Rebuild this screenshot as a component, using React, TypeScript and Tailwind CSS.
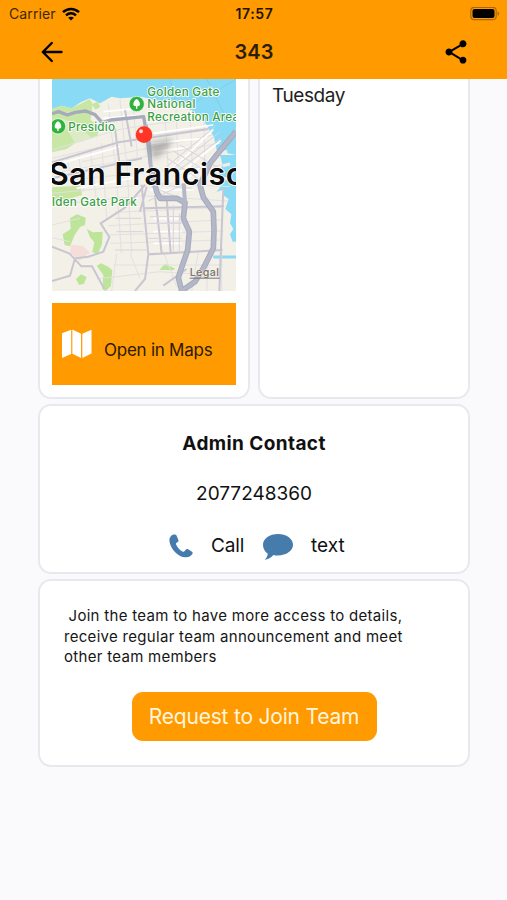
import type { ReactNode } from "react";
import { MdShare } from "react-icons/md";

interface CardProps {
  className: string;
  children: ReactNode;
}

const Card = ({ className, children }: CardProps) => (
  <section className={`border-2 border-[#e8e9ec] bg-white ${className}`}>{children}</section>
);

const StatusBar = () => (
  <div className="grid h-[27px] grid-cols-3 items-center pl-[9px] pr-[7px] text-black">
    <div className="flex items-center gap-[6px]">
      <span className="text-[14px] leading-none tracking-[0.1px] text-[#3b2808]">Carrier</span>
      <svg width="18" height="14" viewBox="0 0 18 14" fill="none" stroke="black" strokeWidth="2.5">
        <path d="M1 5.2C5.6.8 12.4.8 17 5.2" />
        <path d="M4 8.4c3-2.8 7-2.8 10 0" />
        <path d="M9 13.6 6.2 10.8c1.6-1.5 4-1.5 5.6 0Z" fill="black" stroke="none" />
      </svg>
    </div>
    <span className="text-center text-[14px] font-semibold leading-none tracking-[0.6px] text-[#201400]">17:57</span>
    <svg className="justify-self-end" width="30" height="14" viewBox="0 0 30 14">
      <rect x=".8" y=".3" width="25.4" height="12.4" rx="3.5" fill="none" stroke="#a8690c" strokeWidth="1.2" />
      <rect x="2.5" y="2" width="22" height="9" rx="2" fill="black" />
      <path d="M27.6 4.200c2 .8 2 3.800 0 4.600Z" fill="#a8690c" />
    </svg>
  </div>
);

const Header = () => (
  <header className="h-[79px] bg-[#ff9a00]">
    <StatusBar />
    <nav className="grid h-[50px] grid-cols-3 items-center pl-[38px] pr-[37px]">
      <button aria-label="Back">
        <svg width="28" height="28" viewBox="0 0 28 28" fill="none" stroke="black" strokeWidth="2.4" strokeLinecap="round" strokeLinejoin="round">
          <path d="M23.500 14H5M13.800 5 4.800 14l9 9" />
        </svg>
      </button>
      <h1 className="text-center text-[20px] font-semibold leading-none text-[#2b1e08]">343</h1>
      <button aria-label="Share" className="justify-self-end">
        <MdShare size={28} />
      </button>
    </nav>
  </header>
);

const TreeMarker = ({ x, y }: { x: number; y: number }) => (
  <g transform={`translate(${x} ${y})`}>
    <circle r="23" fill="#2fb33d" stroke="white" strokeWidth="2" />
    <path d="M0-15c-7 3-10 11-10 16 0 4 3 6 8 6v7h4V7c5 0 8-2 8-6 0-5-3-13-10-16Z" fill="white" />
  </g>
);

const CityMap = () => (
  <svg className="block h-[212px] w-full" viewBox="36 12 552 636" preserveAspectRatio="none">
    <defs>
      <filter id="shade" x="-50%" y="-50%" width="200%" height="200%">
        <feGaussianBlur stdDeviation="9" />
      </filter>
    </defs>
    <rect x="36" y="12" width="552" height="636" fill="#f3f0e8" />

    {/* ocean and bay */}
    <path d="M36 12H588V240L560 234 530 225 522 185 490 135 455 105 400 82 345 76 305 65 240 70 215 65 180 85 150 70 122 82 95 100 65 92 36 102Z" fill="#88daf5" />
    <path d="M588 240H540L548 270 535 300 550 325 530 350 508 358 548 345 552 362 566 372 556 402 574 418 570 444 580 462 570 478 578 500H588Z" fill="#88daf5" />
    <path d="M520 546h68" stroke="#88daf5" strokeWidth="9" fill="none" />
    <path d="M548 230l14 0M548 272l22-5M550 310l24 4" stroke="#f2eee5" strokeWidth="9" fill="none" />
    <path d="M450 105c15-25 45-45 85-60l53-33M500 12l55 110M390 12l20 80" stroke="#7bc8e5" strokeWidth="2" fill="none" />

    {/* parks */}
    <path d="M36 102 65 92 95 100 125 85 150 72 158 88 152 135 180 155 172 182 105 205 80 222 36 232Z" fill="#c8e7a5" />
    <path d="M60 130l50 15 45 45-50 15-20-35Z" fill="#dcebc5" />
    <path d="M155 88l18-8 8 15-14 9ZM36 337l86-5 4 28-90 26Z" fill="#c5e5a1" />
    <path d="M90 430 111 418 137 428 135 450 120 456 104 480 90 514 74 510 68 478 92 462ZM140 461 158 472 188 470 186 508 173 538 157 531 163 502 150 487ZM170 572 183 565 205 575 217 586 213 632 198 648 187 642 190 600ZM108 612l15-14 17 8-8 20-15 4ZM358 584l18-18 30 15-8 5Z" fill="#bde59a" />
    <path d="M93 509l35 4 22 20-33 25-27-28Z" fill="#f5ddd9" />

    {/* street grid */}
    <g fill="none" stroke="#e2e0e2" strokeWidth="3">
      <path d="M36 225 230 165 320 150 460 132M36 250 310 185 500 160M125 260 520 180M36 295 540 205M36 320 550 270M36 355 360 325 570 335M36 390 310 362 565 378M225 412 550 397M205 452 545 435M205 480 550 468M210 505 545 495M36 450 120 430M36 488 90 500M220 570H550M170 612 360 590 545 603" />
      <path d="M205 85 222 240M240 75 258 250M278 70 292 245M80 245 100 332M115 230 130 350M150 220 170 380M185 205 200 430M225 245 244 535M260 250 275 535M375 125 388 335M408 105 417 330M450 110 458 300M492 140 495 300M230 535 215 648M270 535 300 610M370 530 410 635M475 530 455 648M505 540 500 648M545 520V648" />
    </g>
    <g fill="none" stroke="white" strokeWidth="5">
      <path d="M190 110 300 100M190 130 300 120M340 175 520 150M335 205 490 190M340 230 440 218M60 265l180-50M110 340l190-35M385 293l135-129M400 312l142-115M430 320l112-95M330 345h130M340 430h85M340 470h85M340 505h85" />
    </g>
    <g fill="none" stroke="#c9c6d2" strokeWidth="6">
      <path d="M305 330 325 538 548 525M345 360 365 535M380 370 392 535M312 400 552 394M36 618 90 602 105 550 145 545 190 530 208 486 182 445 255 398 315 330M325 538 315 612 285 648M320 335 300 410M550 340 538 648M36 515l53 21 35 38 32 0 37 68M370 632l70-50M225 160l15 120M255 105l20 110M36 262l200-60 270-40M36 310l270-60" />
    </g>
    <g fill="none" stroke="#d6d4dc" strokeWidth="3">
      <path d="M380 275 526 154M393 285 541 170M410 290 543 190M380 248 500 328M400 228 532 310M420 210 548 286M320 325 455 340M325 378l115-55M335 335l110 45M330 425h105M325 445h100M325 490h100M400 390v140M418 415v120M230 470h80M225 430h80M225 525h100" />
    </g>

    {/* highways */}
    <g fill="none" stroke="#a6aabc" strokeLinejoin="round">
      <path d="M36 116 56 110 82 120 106 112 137 108 165 119 186 143 212 135 311 125 322 190 333 285" strokeWidth="10" />
      <path d="M333 280 350 350 360 370 410 370 435 383 430 430 448 470 443 525 425 577 415 608 425 647M588 170 548 218 510 265 480 330 490 367 520 410 522 465 520 520 490 580 465 620 425 648" strokeWidth="17" />
    </g>
    <g fill="none" stroke="#b3b7c8" strokeLinejoin="round">
      <path d="M318 150 328 210 333 280 350 350 360 370 410 370 435 383 430 430 448 470 443 525 425 577 415 608 425 647M588 170 548 218 510 265 480 330 490 367 520 410 522 465 520 520 490 580 465 620 425 648" strokeWidth="11" />
      <path d="M431 325 435 383" strokeWidth="12" />
    </g>
    <path d="M322 205 398 190 385 220 342 255Z" fill="#777" opacity=".5" filter="url(#shade)" />

    {/* place names */}
    <g className="font-medium" fill="#3c9e45" stroke="white" strokeWidth="5" paintOrder="stroke" fontSize="35">
      <text x="322" y="63" textLength="216">Golden Gate</text>
      <text x="322" y="100" textLength="144">National</text>
      <text x="322" y="138" textLength="275">Recreation Area</text>
      <text x="85" y="167" textLength="140">Presidio</text>
      <text x="36" y="392" textLength="254">lden Gate Park</text>
    </g>
    <TreeMarker x={290} y={87} />
    <TreeMarker x={54} y={154} />
    <text x="26" y="330" fontSize="92" fontWeight="600" fill="#0b0b0b" stroke="white" strokeWidth="5" paintOrder="stroke" textLength="642">San Francisco</text>
    <g fontSize="32" fontWeight="500" fill="#77736f">
      <text x="449" y="604" stroke="#f2eee5" strokeWidth="3" paintOrder="stroke" textLength="88">Legal</text>
      <path d="M449 608h90v3h-90Z" />
    </g>

    <circle cx="312" cy="179" r="25" fill="#ff3528" />
    <circle cx="303" cy="169" r="6" fill="#ffd2ce" />
  </svg>
);

const MapCard = () => (
  <Card className="h-[320px] w-[212px] rounded-b-[13px] border-t-0 px-3">
    <CityMap />
    <button className="mt-3 flex h-[82px] w-full items-center bg-[#ff9a00] pl-[10px]">
      <svg width="30" height="30" viewBox="0 0 31 31" fill="white">
        <path d="M0 4.500 9.500.800v25L0 30ZM10.700.500l9 4.500v25l-9-4.500ZM21 5l9.500-4.300v24.500L21 30Z" />
      </svg>
      <span className="mt-[13px] ml-[12px] whitespace-nowrap text-[17px] leading-none tracking-[-0.25px] text-[#2b1a00]">
        Open in Maps
      </span>
    </button>
  </Card>
);

const ContactCard = () => (
  <Card className="flex h-[170px] flex-col items-center rounded-[13px] pt-[26px] text-[#111]">
    <h2 className="text-[19px] font-bold leading-6 tracking-[0.4px]">Admin Contact</h2>
    <p className="mt-[26px] text-[19px] leading-6">2077248360</p>
    <div className="mt-[27px] flex h-[26px] w-full items-center pl-[129px] text-[19px]">
      <svg width="24" height="24" viewBox="0 0 24 24" fill="#467cab">
        <path d="M3.900.700C1.700 1.500.300 3.700.400 6.600c.300 4.600 3.200 9.200 6.300 12.200 2.900 2.900 6.700 4.900 10.500 4.500 2.900-.200 5.300-1.500 6.300-3.500.400-.800.200-1.500-.500-2l-3.900-2.600c-.800-.500-1.600-.400-2.200.300l-1.500 1.800c-.500.600-1.200.700-1.900.300-2.900-1.600-5.300-4.300-6.400-7.100-.3-.7-.1-1.300.500-1.700l1.200-.8c.7-.5.900-1.200.6-2L7.500 1.500C7 .4 5.200.200 3.900.700Z" />
      </svg>
      <span className="ml-[18px] w-[34px] tracking-[-0.1px]">Call</span>
      <svg className="mt-[2px] ml-[18px]" width="30" height="26" viewBox="0 0 30 26" fill="#467cab">
        <path d="M15 0c8.300 0 15 4.700 15 10.700S23.300 21.400 15 21.400c-1.700 0-3.200-.1-4.600-.5C8.400 23.400 5 25.400 1.500 25.700c2-1.400 3.200-3.600 3.200-6.100C1.800 17.600 0 14.400 0 10.700 0 4.700 6.700 0 15 0Z" />
      </svg>
      <span className="ml-[18px]">text</span>
    </div>
  </Card>
);

const JoinCard = () => (
  <Card className="flex h-[188px] flex-col items-center rounded-[13px] px-6 pt-[25px]">
    <p className="w-full whitespace-pre text-[15px] leading-[20.5px] tracking-[0.3px] text-[#161616]">
      {" Join the team to have more access to details,\nreceive regular team announcement and meet\nother team members"}
    </p>
    <button className="mt-[24px] h-[49px] w-[245px] rounded-[11px] bg-[#ff9a00] text-[21px] leading-none tracking-[-0.2px] text-[#fff5dd]">
      Request to Join Team
    </button>
  </Card>
);

export default function App() {
  return (
    <div className="h-[900px] w-[507px] overflow-hidden bg-[#fafafc] font-['Inter',sans-serif]">
      <Header />
      <main className="flex flex-col gap-[5px] pl-[38px] pr-[37px]">
        <div className="flex justify-between">
          <MapCard />
          <Card className="h-[320px] w-[212px] rounded-b-[13px] border-t-0 px-[12px] pt-[5px]">
            <span className="text-[19px] leading-6 tracking-[-0.4px] text-[#222]">Tuesday</span>
          </Card>
        </div>
        <ContactCard />
        <JoinCard />
      </main>
    </div>
  );
}
